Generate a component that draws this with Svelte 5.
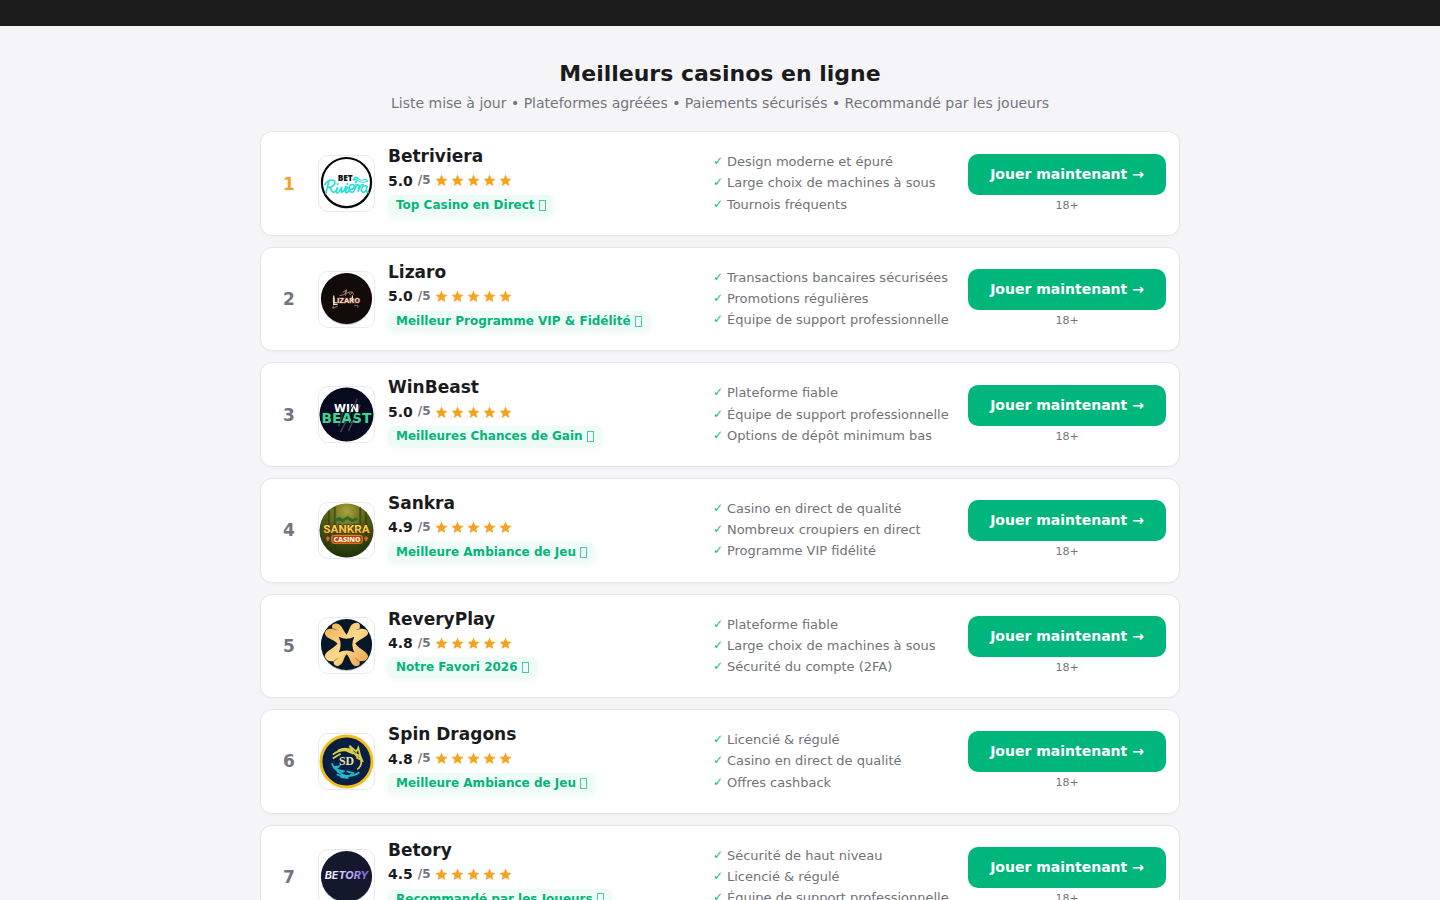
<script>
  const casinos = [
    { id: 'betriviera', name: 'Betriviera', score: '5.0', badge: 'Top Casino en Direct', features: ['Design moderne et épuré', 'Large choix de machines à sous', 'Tournois fréquents'] },
    { id: 'lizaro', name: 'Lizaro', score: '5.0', badge: 'Meilleur Programme VIP & Fidélité', features: ['Transactions bancaires sécurisées', 'Promotions régulières', 'Équipe de support professionnelle'] },
    { id: 'winbeast', name: 'WinBeast', score: '5.0', badge: 'Meilleures Chances de Gain', features: ['Plateforme fiable', 'Équipe de support professionnelle', 'Options de dépôt minimum bas'] },
    { id: 'sankra', name: 'Sankra', score: '4.9', badge: 'Meilleure Ambiance de Jeu', features: ['Casino en direct de qualité', 'Nombreux croupiers en direct', 'Programme VIP fidélité'] },
    { id: 'reveryplay', name: 'ReveryPlay', score: '4.8', badge: 'Notre Favori 2026', features: ['Plateforme fiable', 'Large choix de machines à sous', 'Sécurité du compte (2FA)'] },
    { id: 'spindragons', name: 'Spin Dragons', score: '4.8', badge: 'Meilleure Ambiance de Jeu', features: ['Licencié & régulé', 'Casino en direct de qualité', 'Offres cashback'] },
    { id: 'betory', name: 'Betory', score: '4.5', badge: 'Recommandé par les Joueurs', features: ['Sécurité de haut niveau', 'Licencié & régulé', 'Équipe de support professionnelle'] }
  ];
</script>

<header class="topbar"></header>
<main>
  <div class="intro">
    <h1>Meilleurs casinos en ligne</h1>
    <p>Liste mise à jour • Plateformes agréées • Paiements sécurisés • Recommandé par les joueurs</p>
  </div>
  <ol class="list">
    {#each casinos as casino, i}
      <li class="card">
        <span class="rank" class:first={i === 0}>{i + 1}</span>
        <div class="logo">
          <svg viewBox="0 0 56 56" aria-hidden="true">
            {#if casino.id === 'betriviera'}
              <circle cx="28" cy="28" r="25.5" fill="#c9cccd" />
              <circle cx="28" cy="27" r="25" fill="#fff" stroke="#080808" stroke-width="2.2" />
              <text x="19" y="25" font-family="Open Sans" font-weight="800" font-size="8.5" fill="#111">BET</text>
              <path d="M35 25c1-5 5-4 5-1m-5 1c4-3 6-2 8 0m1 0c2-2 5-1 6 1m-10 0c4 1 7 1 9 0" fill="none" stroke="#2ae0dc" stroke-width="1.2" />
              <g fill="none" stroke="#2adeda" stroke-width="1.7" stroke-linecap="round" stroke-linejoin="round">
                <path d="M10 26L7 38M6 29q4-6 9-4c3 2 0 7-5 7 3 0 2 5 5 5q2 0 4-5l-1 3q-1 4 2 2l3-5v5q4-2 4-6l2 1-2 4q0 3 3 0l2-2c5 0 5-5 2-5-4 0-5 8 0 8q2 0 4-8l3 1-1 6q2-7 5-7M49 31c-5-3-8 5-4 6 3 0 4-6 4-6q-2 6 1 6" />
                <path d="M37 27l2-2M19 28v1M29 28v1" />
              </g>
            {:else if casino.id === 'lizaro'}
              <circle cx="28" cy="28" r="26" fill="#c8c5c4" />
              <circle cx="28" cy="27" r="26" fill="#110b09" />
              <path d="M21 24l5-1 2-5-4 3M27 22q8-4 8 1M15 34l-1 3 5-2M36 34q6 0 3 2M28 18l-1 6M30 21l2 2 2-3" fill="none" stroke="#a87d69" />
              <text x="14" y="32" font-family="Roboto" font-weight="700" font-size="8" fill="#f2ddd2" stroke="#7a422a" stroke-width="1" paint-order="stroke">LIZARO</text>
              <path d="M15 24v9h4M34 24v6" fill="none" stroke="#f2ddd2" stroke-width="1.3" />
            {:else if casino.id === 'winbeast'}
              <circle cx="28" cy="28" r="27.5" fill="#080b20" />
              <path d="M27 17L20 40M39 12L22 46M42 18L30 45" stroke="#3b4357" stroke-width="1.5" />
              <text x="28" y="25" text-anchor="middle" font-family="DejaVu Sans" font-weight="700" font-size="11" fill="#fff">WIN</text>
              <text x="28" y="37" text-anchor="middle" font-family="DejaVu Sans" font-weight="700" font-size="14" fill="#36d890">BEAST</text>
              <path d="M36 16l-5 9M36 27l-4 10" stroke="#080b20" stroke-width="1" />
            {:else if casino.id === 'sankra'}
              <defs>
                <radialGradient id="jungle" cx=".5" cy=".15" r=".85"><stop stop-color="#aaa43a" /><stop offset=".45" stop-color="#565f19" /><stop offset="1" stop-color="#1d3007" /></radialGradient>
                <linearGradient id="gold" x1="0" y1="0" x2="0" y2="1"><stop stop-color="#fff176" /><stop offset="1" stop-color="#e8a51d" /></linearGradient>
              </defs>
              <circle cx="28" cy="28" r="27.5" fill="url(#jungle)" />
              <path d="M10 8v35M16 4v43M42 4v40M48 9v35" stroke="#273909" stroke-width="2" opacity=".6" />
              <path d="M16 18l5-2 3 2 5-3 5 3 5-2" fill="none" stroke="#276c2b" stroke-width="3" />
              <text x="28" y="31" text-anchor="middle" font-family="Roboto" font-weight="700" font-size="12" fill="url(#gold)" stroke="#563407" stroke-width="1.5" paint-order="stroke">SANKRA</text>
              <rect x="13" y="33" width="31" height="8" rx="2" fill="#bd351b" stroke="#e58a26" />
              <text x="28.5" y="39.5" text-anchor="middle" font-family="Open Sans" font-weight="800" font-size="7" fill="#fff2bf">CASINO</text>
              <path d="M9 34v5m-2-3h4M48 34v5m-2-3h4" stroke="#da632a" stroke-width="2" />
            {:else if casino.id === 'reveryplay'}
              <defs><linearGradient id="petals" x1="0" y1="0" x2="1" y2="1"><stop stop-color="#efad4f" /><stop offset=".5" stop-color="#ffda8c" /><stop offset="1" stop-color="#eba04c" /></linearGradient></defs>
              <circle cx="28" cy="28" r="26" fill="#bdc4c9" />
              <circle cx="28" cy="27" r="26" fill="#041827" />
              <path d="M28 17C23 10 22 4 15 6q-3 1-1 5-7-1-8 4c0 6 8 6 13 11-5 6-13 8-13 13q1 6 9 5-1 4 4 5c6-1 6-9 9-12 4 3 4 11 9 12 5 0 5-3 4-5q8 1 9-5c-1-5-9-7-13-13 5-5 13-7 13-11q-1-5-9-4c2-5-1-7-4-6-6 1-5 6-9 12z" fill="url(#petals)" />
              <path d="M20 19q8 4 16 0-4 8 0 16-8-4-16 0 4-8 0-16z" fill="#041827" />
              <path d="M14 11l4 1M42 11l-4 1M15 44l4-3M41 44l-4-3" stroke="#b77932" />
            {:else if casino.id === 'spindragons'}
              <circle cx="28" cy="28" r="26" fill="#061f42" stroke="#f3bd1d" stroke-width="3" />
              <g fill="none" stroke="#d8cc4b" stroke-width="1.8">
                <path d="M14 21q9-7 19-3l8 4q5 9-2 14M19 17q8-4 15 0l-3-5 7 6 2-4 2 8 2 5-6-3M23 15l12 5M34 18l6 6M14 25l8-5M28 17l9 3" />
              </g>
              <g fill="none" stroke="#25b6c7" stroke-width="1.8">
                <path d="M13 30q4 9 13 12 9 2 15-3M14 34l6-1-3 3 9 2-6 1 6 4M18 41q9 5 16 0M28 38l8 2M22 44l8 1" />
              </g>
              <text x="28" y="32" text-anchor="middle" font-family="Liberation Serif" font-weight="700" font-size="12" fill="#e9e4a8">SD</text>
            {:else}
              <defs><linearGradient id="violet"><stop stop-color="#fff" /><stop offset=".5" stop-color="#c9c1ff" /><stop offset="1" stop-color="#765cdd" /></linearGradient></defs>
              <circle cx="28" cy="28" r="26" fill="#c4c6cc" />
              <circle cx="28" cy="27" r="26" fill="#14182d" />
              <text x="28" y="30" text-anchor="middle" font-family="Inter" font-weight="700" font-style="italic" font-size="11" fill="url(#violet)">BETORY</text>
            {/if}
          </svg>
        </div>
        <div class="info">
          <h2>{casino.name}</h2>
          <div class="rating">
            <strong>{casino.score}</strong>
            <span class="outof">/5</span>
            <span class="stars" role="img" aria-label="5 étoiles">
              {#each Array(5) as _}
                <svg viewBox="0 0 24 24"><path d="M12 1l3.2 7.4 8 .7-6 5.3 1.8 7.8-7-4.1-7 4.1 1.8-7.8-6-5.3 8-.7z" /></svg>
              {/each}
            </span>
          </div>
          <span class="badge">{casino.badge}<i class="box"></i></span>
        </div>
        <ul class="features">
          {#each casino.features as feature}
            <li><span class="check">✓</span>{feature}</li>
          {/each}
        </ul>
        <div class="action">
          <a href="#{casino.id}">Jouer maintenant →</a>
          <small>18+</small>
        </div>
      </li>
    {/each}
  </ol>
</main>

<style>
  :global(body) {
    background: #f5f5f8;
    color: #1b1b1d;
    font-family: "DejaVu Sans", sans-serif;
  }
  .topbar { height: 26px; background: #1b1b1b; }
  main { max-width: 920px; margin: 0 auto; padding: 33px 16px; }
  .intro { text-align: center; margin-bottom: 18px; }
  h1 { margin: 0; font-size: 22px; line-height: 30px; }
  .intro p { margin: 4px 0 0; color: #74747f; font-size: 14px; line-height: 1.45; }
  .list { display: flex; flex-direction: column; gap: 11px; margin: 0; padding: 0; list-style: none; }
  .card {
    display: grid;
    grid-template-columns: 30px 56px 1.29fr 1fr 198px;
    column-gap: 14px;
    align-items: center;
    padding: 14px 13px;
    border: 1px solid #e5e6ea;
    border-radius: 12px;
    background: #fff;
    box-shadow: 0 1px 3px #00000008;
  }
  .rank { color: #74747f; font-size: 17px; font-weight: 700; text-align: center; }
  .rank.first { color: #f1a32a; }
  .logo {
    box-sizing: border-box;
    height: 57px;
    width: 57px;
    overflow: hidden;
    border: 1px solid #e9eaed;
    border-radius: 10px;
    background: #fff;
  }
  .logo svg { display: block; width: 100%; height: 100%; }
  .info { min-width: 0; padding-bottom: 5px; }
  h2 { margin: 0 0 3px; font-size: 17px; line-height: 1.2; }
  .rating { display: flex; align-items: center; margin-bottom: 3px; font-size: 14px; line-height: 1.6; }
  .outof { margin: 0 4px 0 5px; color: #74747f; font-size: 12px; font-weight: 700; }
  .stars { display: flex; gap: 3px; }
  .stars svg { width: 13px; height: 13px; fill: #f3a421; }
  .badge {
    display: flex;
    align-items: center;
    width: fit-content;
    padding: 2px 8px;
    border-radius: 6px;
    background: #effbf7;
    box-shadow: 0 2px 6px #00b87a12;
    color: #05b577;
    font-size: 12px;
    font-weight: 700;
    line-height: 1.4;
  }
  .box { box-sizing: border-box; width: 7px; height: 11px; margin-left: 4px; border: 1px solid #4cc99e; }
  .features { display: grid; gap: 3px; margin: 0; padding: 0; list-style: none; color: #707378; font-size: 13px; line-height: 1.4; white-space: nowrap; }
  .features li { display: flex; }
  .check { width: 14px; color: #16b67c; font-size: 12px; }
  .action { display: flex; flex-direction: column; gap: 3px; text-align: center; }
  .action a {
    padding: 12px 0;
    border-radius: 10px;
    background: #00b67a;
    color: #fff;
    font-size: 14px;
    font-weight: 700;
    line-height: 17px;
    text-decoration: none;
  }
  small { color: #74747f; font-size: 11px; line-height: 16px; }
  @media (max-width: 860px) {
    .card { grid-template-columns: 30px 56px 1fr; row-gap: 12px; }
    .features, .action { grid-column: 1 / -1; }
  }
</style>
